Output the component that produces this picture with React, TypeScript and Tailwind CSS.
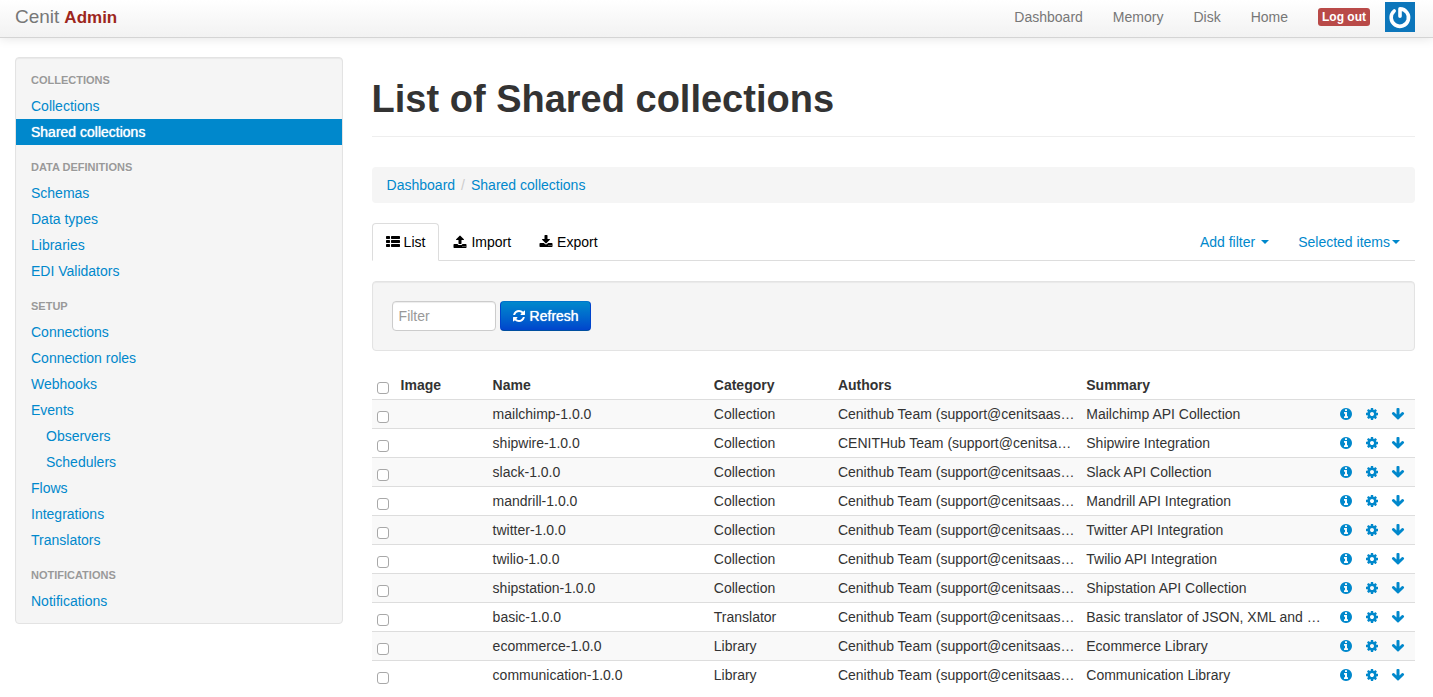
import React from "react";

const glyphs = {
  thList:
    "M512 1248v192q0 40-28 68t-68 28h-320q-40 0-68-28t-28-68v-192q0-40 28-68t68-28h320q40 0 68 28t28 68zm0-512v192q0 40-28 68t-68 28h-320q-40 0-68-28t-28-68v-192q0-40 28-68t68-28h320q40 0 68 28t28 68zm1280 512v192q0 40-28 68t-68 28h-960q-40 0-68-28t-28-68v-192q0-40 28-68t68-28h960q40 0 68 28t28 68zm-1280-1024v192q0 40-28 68t-68 28h-320q-40 0-68-28t-28-68v-192q0-40 28-68t68-28h320q40 0 68 28t28 68zm1280 512v192q0 40-28 68t-68 28h-960q-40 0-68-28t-28-68v-192q0-40 28-68t68-28h960q40 0 68 28t28 68zm0-512v192q0 40-28 68t-68 28h-960q-40 0-68-28t-28-68v-192q0-40 28-68t68-28h960q40 0 68 28t28 68z",
  upload:
    "M1344 1472q0-26-19-45t-45-19-45 19-19 45 19 45 45 19 45-19 19-45zm256 0q0-26-19-45t-45-19-45 19-19 45 19 45 45 19 45-19 19-45zm128-224v320q0 40-28 68t-68 28h-1472q-40 0-68-28t-28-68v-320q0-40 28-68t68-28h427q21 56 70.5 92t110.5 36h256q61 0 110.5-36t70.5-92h427q40 0 68 28t28 68zm-325-648q-17 40-59 40h-256v448q0 26-19 45t-45 19h-256q-26 0-45-19t-19-45v-448h-256q-42 0-59-40-17-39 14-69l448-448q18-19 45-19t45 19l448 448q31 30 14 69z",
  download:
    "M1344 1344q0-26-19-45t-45-19-45 19-19 45 19 45 45 19 45-19 19-45zm256 0q0-26-19-45t-45-19-45 19-19 45 19 45 45 19 45-19 19-45zm128-224v320q0 40-28 68t-68 28h-1472q-40 0-68-28t-28-68v-320q0-40 28-68t68-28h465l135 136q58 56 136 56t136-56l136-136h464q40 0 68 28t28 68zm-325-569q17 41-14 70l-448 448q-18 19-45 19t-45-19l-448-448q-31-29-14-70 17-39 59-39h256v-448q0-26 19-45t45-19h256q26 0 45 19t19 45v448h256q42 0 59 39z",
  refresh:
    "M1639 1056q0 5-1 7-64 268-268 434.5t-478 166.5q-146 0-282.5-55t-243.5-157l-129 129q-19 19-45 19t-45-19-19-45v-448q0-26 19-45t45-19h448q26 0 45 19t19 45-19 45l-137 137q71 66 161 102t187 36q134 0 250-65t186-179q11-17 53-117 8-23 30-23h192q13 0 22.5 9.5t9.5 22.5zm25-800v448q0 26-19 45t-45 19h-448q-26 0-45-19t-19-45 19-45l138-138q-148-137-349-137-134 0-250 65t-186 179q-11 17-53 117-8 23-30 23h-199q-13 0-22.5-9.5t-9.5-22.5v-7q65-268 270-434.5t480-166.5q146 0 284 55.5t245 156.5l130-129q19-19 45-19t45 19 19 45z",
  info:
    "M1152 1376v-160q0-14-9-23t-23-9h-96v-512q0-14-9-23t-23-9h-320q-14 0-23 9t-9 23v160q0 14 9 23t23 9h96v320h-96q-14 0-23 9t-9 23v160q0 14 9 23t23 9h448q14 0 23-9t9-23zm-128-896v-160q0-14-9-23t-23-9h-192q-14 0-23 9t-9 23v160q0 14 9 23t23 9h192q14 0 23-9t9-23zm640 416q0 209-103 385.5t-279.5 279.5-385.5 103-385.5-103-279.5-279.5-103-385.5 103-385.5 279.5-279.5 385.5-103 385.5 103 279.5 279.5 103 385.5z",
  cog:
    "M1152 896q0-106-75-181t-181-75-181 75-75 181 75 181 181 75 181-75 75-181zm512-109v222q0 12-8 23t-20 13l-185 28q-19 54-39 91 35 50 107 138 10 12 10 25t-9 23q-27 37-99 108t-94 71q-12 0-26-9l-138-108q-44 23-91 38-16 136-29 186-7 28-36 28h-222q-14 0-24.5-8.5t-11.5-21.5l-28-184q-49-16-90-37l-141 107q-10 9-25 9-14 0-25-11-126-114-165-168-7-10-7-23 0-12 8-23 15-21 51-66.5t54-70.5q-27-50-41-99l-183-27q-13-2-21-12.5t-8-23.5v-222q0-12 8-23t19-13l186-28q14-46 39-92-40-57-107-138-10-12-10-24 0-10 9-23 26-36 98.5-107.5t94.5-71.5q13 0 26 10l138 107q44-23 91-38 16-136 29-186 7-28 36-28h222q14 0 24.5 8.5t11.5 21.5l28 184q49 16 90 37l142-107q9-9 24-9 13 0 25 10 129 119 165 170 7 8 7 22 0 12-8 23-15 21-51 66.5t-54 70.5q26 50 41 98l183 28q13 2 21 12.5t8 23.5z",
  arrowDown:
    "M1675 832q0 53-37 90l-651 652q-39 37-91 37-53 0-90-37l-651-652q-38-36-38-90 0-53 38-91l74-75q39-37 91-37 53 0 90 37l294 294v-704q0-52 38-90t90-38h128q52 0 90 38t38 90v704l294-294q37-37 90-37 52 0 91 37l75 75q37 39 37 91z",
};

function Icon({ name }: { name: keyof typeof glyphs }) {
  return (
    <svg viewBox="0 0 1792 1792" className="size-[14px] shrink-0 fill-current" aria-hidden="true">
      <path d={glyphs[name]} />
    </svg>
  );
}

function Caret() {
  return (
    <svg viewBox="0 0 8 4" className="h-1 w-2 shrink-0 fill-current" aria-hidden="true">
      <path d="M0 0h8L4 4z" />
    </svg>
  );
}

type NavItem = { label: string; active?: boolean; nested?: boolean };

const sections: { title: string; items: NavItem[] }[] = [
  { title: "Collections", items: [{ label: "Collections" }, { label: "Shared collections", active: true }] },
  {
    title: "Data definitions",
    items: [{ label: "Schemas" }, { label: "Data types" }, { label: "Libraries" }, { label: "EDI Validators" }],
  },
  {
    title: "Setup",
    items: [
      { label: "Connections" },
      { label: "Connection roles" },
      { label: "Webhooks" },
      { label: "Events" },
      { label: "Observers", nested: true },
      { label: "Schedulers", nested: true },
      { label: "Flows" },
      { label: "Integrations" },
      { label: "Translators" },
    ],
  },
  { title: "Notifications", items: [{ label: "Notifications" }] },
];

const team = "Cenithub Team (support@cenitsaas…";

const rows = [
  ["mailchimp-1.0.0", "Collection", team, "Mailchimp API Collection"],
  ["shipwire-1.0.0", "Collection", "CENITHub Team (support@cenitsa…", "Shipwire Integration"],
  ["slack-1.0.0", "Collection", team, "Slack API Collection"],
  ["mandrill-1.0.0", "Collection", team, "Mandrill API Integration"],
  ["twitter-1.0.0", "Collection", team, "Twitter API Integration"],
  ["twilio-1.0.0", "Collection", team, "Twilio API Integration"],
  ["shipstation-1.0.0", "Collection", team, "Shipstation API Collection"],
  ["basic-1.0.0", "Translator", team, "Basic translator of JSON, XML and …"],
  ["ecommerce-1.0.0", "Library", team, "Ecommerce Library"],
  ["communication-1.0.0", "Library", team, "Communication Library"],
];

function CheckBox({ label }: { label: string }) {
  return (
    <div className="flex h-5 items-end pb-px">
      <input
        type="checkbox"
        aria-label={label}
        className="size-3 appearance-none rounded-[3px] border border-[#a8a8a8] bg-white checked:bg-[#0088cc]"
      />
    </div>
  );
}

function Header() {
  return (
    <header className="flex h-[38px] items-center justify-between border-b border-[#d4d4d4] bg-gradient-to-b from-white to-[#f2f2f2] pr-[18px] pb-[3px] pl-[15px] shadow-[0_1px_10px_rgba(0,0,0,0.1)]">
      <a href="#" className="flex items-baseline gap-[5px] leading-5 text-[#777]">
        <span className="text-[19px] font-light">Cenit</span>
        <strong className="text-[17px] text-[#9d261d]">Admin</strong>
      </a>
      <nav className="flex items-center text-[#777]">
        {["Dashboard", "Memory", "Disk", "Home"].map((label) => (
          <a key={label} href="#" className="px-[15px]">
            {label}
          </a>
        ))}
        <a href="#" className="mx-[15px] rounded-[3px] bg-[#b94a48] px-1 text-[12px] leading-[18px] font-bold text-white">
          Log out
        </a>
        <a href="#" aria-label="Profile">
          <svg viewBox="0 0 30 30" className="size-[30px]" aria-hidden="true">
            <rect width="30" height="30" fill="#0c76bb" />
            <path
              d="M9.200 9A8.700 8.700 0 1 0 15 6.900V14.200"
              fill="none"
              stroke="#fff"
              strokeWidth="3.600"
              strokeLinecap="round"
              strokeLinejoin="round"
            />
          </svg>
        </a>
      </nav>
    </header>
  );
}

function Sidebar() {
  return (
    <aside className="w-[23.4%] shrink-0 rounded border border-[#e3e3e3] bg-[#f5f5f5] py-[9px] shadow-[inset_0_1px_1px_rgba(0,0,0,0.05)]">
      <nav className="flex flex-col gap-[9px]">
        {sections.map((section) => (
          <section key={section.title}>
            <h2 className="px-[15px] py-[3px] text-[11px] font-bold text-[#999] uppercase [text-shadow:0_1px_0_rgba(255,255,255,0.5)]">
              {section.title}
            </h2>
            <ul>
              {section.items.map((item) => (
                <li key={item.label}>
                  <a
                    href="#"
                    className={
                      item.active
                        ? "block bg-[#0088cc] px-[15px] py-[3px] text-white [text-shadow:0_0_1px_#fff]"
                        : item.nested
                          ? "block py-[3px] pr-[15px] pl-[30px] text-[#0088cc]"
                          : "block px-[15px] py-[3px] text-[#0088cc]"
                    }
                  >
                    {item.label}
                  </a>
                </li>
              ))}
            </ul>
          </section>
        ))}
      </nav>
    </aside>
  );
}

function Tabs() {
  return (
    <div className="mb-5 flex justify-between border-b border-[#ddd]">
      <div className="flex text-black">
        <a
          href="#"
          className="-mb-px flex items-center gap-1 rounded-t border border-[#ddd] border-b-white bg-white px-[13px] py-2"
        >
          <Icon name="thList" />
          List
        </a>
        <a href="#" className="flex items-center gap-1 px-[14px] py-2">
          <Icon name="upload" />
          Import
        </a>
        <a href="#" className="flex items-center gap-1 px-[14px] py-2">
          <Icon name="download" />
          Export
        </a>
      </div>
      <div className="flex text-[#0088cc]">
        <button type="button" className="flex items-center gap-[6px] px-[14px]">
          Add filter
          <Caret />
        </button>
        <button type="button" className="flex items-center gap-[2px] px-[15px]">
          Selected items
          <Caret />
        </button>
      </div>
    </div>
  );
}

function CollectionsTable() {
  return (
    <table className="w-full table-fixed text-left">
      <colgroup>
        <col className="w-6" />
        <col className="w-[92px]" />
        <col className="w-[21.2%]" />
        <col className="w-[11.9%]" />
        <col className="w-[23.8%]" />
        <col />
        <col className="w-[87px]" />
      </colgroup>
      <thead>
        <tr>
          <th className="py-1 pl-[5px]">
            <CheckBox label="Select all" />
          </th>
          {["Image", "Name", "Category", "Authors", "Summary"].map((title) => (
            <th key={title} className="px-[5px] py-1 font-bold">
              {title}
            </th>
          ))}
          <th aria-label="Actions" />
        </tr>
      </thead>
      <tbody>
        {rows.map((row) => (
          <tr key={row[0]} className="border-t border-[#ddd] odd:bg-[#f9f9f9]">
            <td className="py-1 pl-[5px]">
              <CheckBox label={`Select ${row[0]}`} />
            </td>
            <td />
            {row.map((cell, i) => (
              <td key={i} className="px-[5px] py-1 whitespace-nowrap">
                {cell}
              </td>
            ))}
            <td className="py-1 pr-[10px]">
              <div className="flex justify-end gap-3 text-[#0088cc]">
                <a href="#" aria-label="Show">
                  <Icon name="info" />
                </a>
                <a href="#" aria-label="Edit">
                  <Icon name="cog" />
                </a>
                <a href="#" aria-label="Pull">
                  <Icon name="arrowDown" />
                </a>
              </div>
            </td>
          </tr>
        ))}
      </tbody>
    </table>
  );
}

export default function App() {
  return (
    <div className="min-h-screen bg-white font-['Liberation_Sans',Arial,sans-serif] text-[14px] leading-5 text-[#333]">
      <Header />
      <div className="flex items-start gap-[29px] pt-[19px] pr-[18px] pl-[15px]">
        <Sidebar />
        <main className="min-w-0 flex-1">
          <h1 className="mb-[30px] border-b border-[#eee] pt-[22px] pb-[17px] text-[38px] leading-10 font-bold">
            List of Shared collections
          </h1>
          <nav aria-label="Breadcrumb" className="mb-5 flex gap-[6px] rounded bg-[#f5f5f5] px-[15px] py-2 text-[#0088cc]">
            <a href="#">Dashboard</a>
            <span className="text-[#ccc]">/</span>
            <a href="#">Shared collections</a>
          </nav>
          <Tabs />
          <form
            onSubmit={(event) => event.preventDefault()}
            className="mb-5 flex gap-1 rounded border border-[#e3e3e3] bg-[#f5f5f5] p-[19px] shadow-[inset_0_1px_1px_rgba(0,0,0,0.05)]"
          >
            <input
              type="text"
              aria-label="Filter"
              placeholder="Filter"
              className="h-[30px] w-[104px] rounded border border-[#ccc] bg-white px-[6px] shadow-[inset_0_1px_1px_rgba(0,0,0,0.075)] placeholder:text-[#999]"
            />
            <button
              type="submit"
              className="flex h-[30px] items-center gap-1 rounded border border-[#0044cc] border-t-[#0074cc] border-b-[#002a80]/60 bg-gradient-to-b from-[#0088cc] to-[#0044cc] px-[11px] text-white [text-shadow:0_0_1px_#fff]"
            >
              <Icon name="refresh" />
              Refresh
            </button>
          </form>
          <CollectionsTable />
        </main>
      </div>
    </div>
  );
}
